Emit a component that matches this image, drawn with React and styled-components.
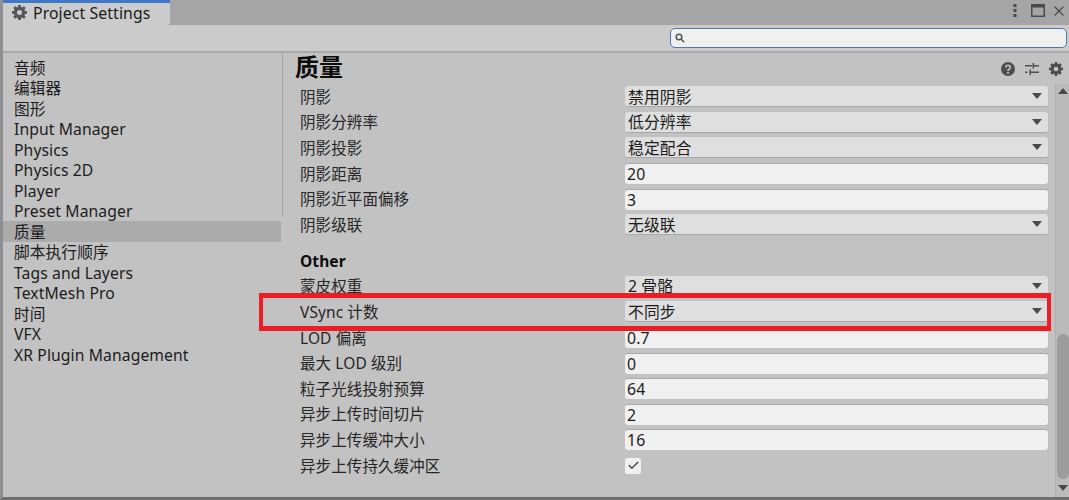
import { Check, X } from 'lucide-react'
import styled, { createGlobalStyle } from 'styled-components'

const FONT = `"Noto Sans", "Noto Sans CJK SC", sans-serif`

const GlobalStyle = createGlobalStyle`
    html, body {
        margin: 0;
        height: 100%;
        overflow: hidden;
        background: #c2c2c2;
    }
    #root { height: 100%; }
`

const Window = styled.div`
    position: relative;
    display: flex;
    flex-direction: column;
    width: 1069px;
    height: 500px;
    box-sizing: border-box;
    border-left: 3px solid #8f8f8f;
    border-bottom: 3px solid #6e6e6e;
    background: #c2c2c2;
    color: #1c1c1c;
    font-family: ${ FONT };
    font-size: 15.5px;
    letter-spacing: 0.1px;
`

const TabBar = styled.div`
    display: flex;
    align-items: flex-start;
    justify-content: space-between;
    height: 25px;
    flex: none;
    background: #a5a5a5;
`

const Tab = styled.div`
    display: flex;
    align-items: center;
    gap: 6px;
    width: 167px;
    height: 25px;
    box-sizing: border-box;
    padding: 0 0 3px 9px;
    border-top: 3px solid #3f78c6;
    border-radius: 0 0 3px 0;
    background: #cbcbcb;
    font-size: 15.8px;
    color: #1a1a1a;
`

const TabIcon = styled.span`
    display: flex;
    color: #555;
`

const WindowButtons = styled.div`
    display: flex;
    align-items: center;
    gap: 6px;
    height: 21px;
    padding-right: 2px;
    color: #4a4a4a;
`

const MoreButton = styled.span`
    display: flex;
    margin-right: 8px;
`

const Toolbar = styled.div`
    display: flex;
    justify-content: flex-end;
    align-items: center;
    height: 26px;
    flex: none;
    padding-right: 2px;
    background: #cbcbcb;
    border-bottom: 2px solid #a9a9a9;
`

const SearchField = styled.div`
    display: flex;
    align-items: center;
    width: 397px;
    height: 20px;
    box-sizing: border-box;
    padding-left: 4px;
    border: 1px solid #4f79ad;
    border-radius: 5px;
    background: #f0f0f0;
    color: #555;
`

const Body = styled.div`
    display: flex;
    flex: 1;
    min-height: 0;
`

const Sidebar = styled.nav`
    display: flex;
    flex-direction: column;
    width: 278px;
    flex: none;
    padding-top: 4.5px;
`

const NavItem = styled.div`
    height: 20.5px;
    line-height: 20.5px;
    padding-left: 11px;
    font-size: 15.7px;
    white-space: nowrap;
    background: ${ ( { $selected } ) => $selected ? `#ababab` : `transparent` };
    box-shadow: ${ ( { $selected } ) => $selected ? `0 -1px #ababab` : `none` };
`

const SidebarEdge = styled.div`
    width: 1px;
    flex: none;
    margin-left: 1px;
    height: 163px;
    background: #a6a6a6;
`

const Main = styled.main`
    display: flex;
    flex-direction: column;
    flex: 1;
    min-width: 0;
`

const Header = styled.header`
    display: flex;
    align-items: center;
    justify-content: space-between;
    height: 31px;
    flex: none;
    padding: 0 6px 0 12px;
`

const Title = styled.h1`
    margin: 0 0 4px;
    font-size: 24px;
    font-weight: 700;
    line-height: 27px;
    letter-spacing: 0;
    color: #0c0c0c;
`

const HeaderIcons = styled.div`
    display: flex;
    align-items: center;
    gap: 10px;
    color: #4d4d4d;
`

const Content = styled.div`
    display: flex;
    flex: 1;
    min-height: 0;
`

const Form = styled.div`
    display: flex;
    flex-direction: column;
    flex: 1;
    padding: 0 7px 0 17px;
`

const Row = styled.div`
    display: grid;
    grid-template-columns: 325px 1fr;
    align-items: center;
    height: 25.6px;
    flex: none;
`

const Label = styled.span`
    padding-bottom: 1px;
    white-space: nowrap;
    color: #262626;
`

const SectionTitle = styled.div`
    height: 25.6px;
    box-sizing: border-box;
    padding-top: 2px;
    line-height: 23.6px;
    margin-top: 10.4px;
    font-weight: 700;
    color: #0c0c0c;
`

const Dropdown = styled.div`
    display: flex;
    align-items: center;
    justify-content: space-between;
    height: 21px;
    box-sizing: border-box;
    padding: 0 6px 0 3px;
    border-radius: 3px;
    border-bottom: 1px solid #a8a8a8;
    background: #dfdfdf;
    font-size: 15.8px;
`

const Caret = styled.span`
    width: 0;
    height: 0;
    border-left: 5.5px solid transparent;
    border-right: 5.5px solid transparent;
    border-top: 6px solid #4a4a4a;
`

const TextInput = styled.div`
    display: flex;
    align-items: center;
    height: 21px;
    box-sizing: border-box;
    padding-left: 2px;
    border-top: 1px solid #a9a9a9;
    border-radius: 3px;
    background: #f0f0f0;
    font-size: 15.8px;
`

const Checkbox = styled.div`
    display: flex;
    align-items: center;
    justify-content: center;
    width: 16px;
    height: 16px;
    border-radius: 2px;
    background: #f0f0f0;
    color: #444;
`

const Scrollbar = styled.div`
    display: flex;
    flex-direction: column;
    align-items: center;
    width: 13px;
    flex: none;
    padding: 4px 0 6px;
    background: #bbbbbb;
    border-left: 1px solid #b0b0b0;
`

const ScrollArrow = styled.span`
    width: 0;
    height: 0;
    flex: none;
    border-left: 5px solid transparent;
    border-right: 5px solid transparent;
    ${ ( { $up } ) => $up ? `border-bottom: 6px solid #4a4a4a;` : `border-top: 6px solid #4a4a4a;` }
`

const ScrollThumb = styled.div`
    width: 12px;
    height: 145px;
    flex: none;
    margin-top: auto;
    margin-bottom: 6px;
    border-radius: 6px;
    background: #9c9c9c;
`

const Highlight = styled.div`
    position: absolute;
    left: 256px;
    top: 293px;
    width: 784px;
    height: 28px;
    border-style: solid;
    border-color: #ee1c25;
    border-width: 5px 4px;
    pointer-events: none;
`

const NAV_ITEMS = [
    `音频`, `编辑器`, `图形`, `Input Manager`, `Physics`, `Physics 2D`, `Player`, `Preset Manager`, `质量`,
    `脚本执行顺序`, `Tags and Layers`, `TextMesh Pro`, `时间`, `VFX`, `XR Plugin Management`,
]

const SHADOW_ROWS = [
    { label: `阴影`, value: `禁用阴影`, kind: `select` },
    { label: `阴影分辨率`, value: `低分辨率`, kind: `select` },
    { label: `阴影投影`, value: `稳定配合`, kind: `select` },
    { label: `阴影距离`, value: `20`, kind: `input` },
    { label: `阴影近平面偏移`, value: `3`, kind: `input` },
    { label: `阴影级联`, value: `无级联`, kind: `select` },
]

const OTHER_ROWS = [
    { label: `蒙皮权重`, value: `2 骨骼`, kind: `select` },
    { label: `VSync 计数`, value: `不同步`, kind: `select` },
    { label: `LOD 偏离`, value: `0.7`, kind: `input` },
    { label: `最大 LOD 级别`, value: `0`, kind: `input` },
    { label: `粒子光线投射预算`, value: `64`, kind: `input` },
    { label: `异步上传时间切片`, value: `2`, kind: `input` },
    { label: `异步上传缓冲大小`, value: `16`, kind: `input` },
    { label: `异步上传持久缓冲区`, kind: `check` },
]

function GearIcon( { size = 16 } ) {
    return <svg width={ size } height={ size } viewBox="0 0 16 16" fill="currentColor" aria-hidden="true">
        <path fillRule="evenodd" d="M6.7 0h2.6l.4 2.2 1.2.5L12.7 1.4l1.9 1.9-1.3 1.8.5 1.2 2.2.4v2.6l-2.2.4-.5 1.2 1.3 1.8-1.9 1.9-1.8-1.3-1.2.5-.4 2.2H6.7l-.4-2.2-1.2-.5-1.8 1.3-1.9-1.9 1.3-1.8-.5-1.2L0 9.3V6.7l2.2-.4.5-1.2-1.3-1.8 1.9-1.9 1.8 1.3 1.2-.5zM8 5.3a2.7 2.7 0 1 0 0 5.4 2.7 2.7 0 0 0 0-5.4z" />
    </svg>
}

function MoreIcon() {
    return <svg width="4" height="13" viewBox="0 0 4 13" fill="currentColor" aria-hidden="true">
        <rect x="0.5" y="0" width="3" height="3" />
        <rect x="0.5" y="5" width="3" height="3" />
        <rect x="0.5" y="10" width="3" height="3" />
    </svg>
}

function MaximizeIcon() {
    return <svg width="14" height="13" viewBox="0 0 14 13" fill="none" stroke="currentColor" aria-hidden="true">
        <rect x="0.75" y="0.75" width="12.5" height="11.5" strokeWidth="1.5" />
        <rect x="0.5" y="0.5" width="13" height="3" fill="currentColor" stroke="none" />
    </svg>
}

function SearchIcon() {
    return <svg width="10" height="10" viewBox="0 0 10 10" fill="none" stroke="currentColor" strokeWidth="1.5" aria-hidden="true">
        <circle cx="4" cy="4" r="2.8" />
        <path d="M6 6l3.2 3.2" />
    </svg>
}

function HelpIcon() {
    return <svg width="14" height="14" viewBox="0 0 14 14" aria-hidden="true">
        <circle cx="7" cy="7" r="7" fill="currentColor" />
        <path d="M4.8 5.4a2.2 2.2 0 1 1 3.4 1.9c-.8.5-1.2.9-1.2 1.7" fill="none" stroke="#c2c2c2" strokeWidth="1.7" />
        <rect x="6.1" y="10" width="1.8" height="1.8" fill="#c2c2c2" />
    </svg>
}

function PresetsIcon() {
    return <svg width="14" height="14" viewBox="0 0 14 14" fill="currentColor" aria-hidden="true">
        <rect x="0" y="3" width="7" height="1.5" />
        <rect x="9" y="3" width="5" height="1.5" />
        <rect x="7.5" y="1" width="1.5" height="5.5" />
        <rect x="0" y="9.5" width="2.5" height="1.5" />
        <rect x="6" y="9.5" width="8" height="1.5" />
        <rect x="4.5" y="7.5" width="1.5" height="5.5" />
    </svg>
}

function FieldControl( { kind, value } ) {
    if( kind === `select` ) return <Dropdown>{ value }<Caret /></Dropdown>
    if( kind === `input` ) return <TextInput>{ value }</TextInput>

    return <Checkbox><Check size={ 13 } strokeWidth={ 2.5 } /></Checkbox>
}

function SettingRows( { rows } ) {
    return rows.map( row => <Row key={ row.label }>
        <Label>{ row.label }</Label>
        <FieldControl kind={ row.kind } value={ row.value } />
    </Row> )
}

export default function App() {
    return <Window>
        <GlobalStyle />
        <TabBar>
            <Tab>
                <TabIcon><GearIcon size={ 15 } /></TabIcon>
                Project Settings
            </Tab>
            <WindowButtons>
                <MoreButton><MoreIcon /></MoreButton>
                <MaximizeIcon />
                <X size={ 16 } strokeWidth={ 1.8 } />
            </WindowButtons>
        </TabBar>
        <Toolbar>
            <SearchField><SearchIcon /></SearchField>
        </Toolbar>
        <Body>
            <Sidebar>
                { NAV_ITEMS.map( item => <NavItem key={ item } $selected={ item === `质量` }>{ item }</NavItem> ) }
            </Sidebar>
            <SidebarEdge />
            <Main>
                <Header>
                    <Title>质量</Title>
                    <HeaderIcons>
                        <HelpIcon />
                        <PresetsIcon />
                        <GearIcon size={ 14 } />
                    </HeaderIcons>
                </Header>
                <Content>
                    <Form>
                        <SettingRows rows={ SHADOW_ROWS } />
                        <SectionTitle>Other</SectionTitle>
                        <SettingRows rows={ OTHER_ROWS } />
                    </Form>
                    <Scrollbar>
                        <ScrollArrow $up />
                        <ScrollThumb />
                        <ScrollArrow />
                    </Scrollbar>
                </Content>
            </Main>
        </Body>
        <Highlight />
    </Window>
}
